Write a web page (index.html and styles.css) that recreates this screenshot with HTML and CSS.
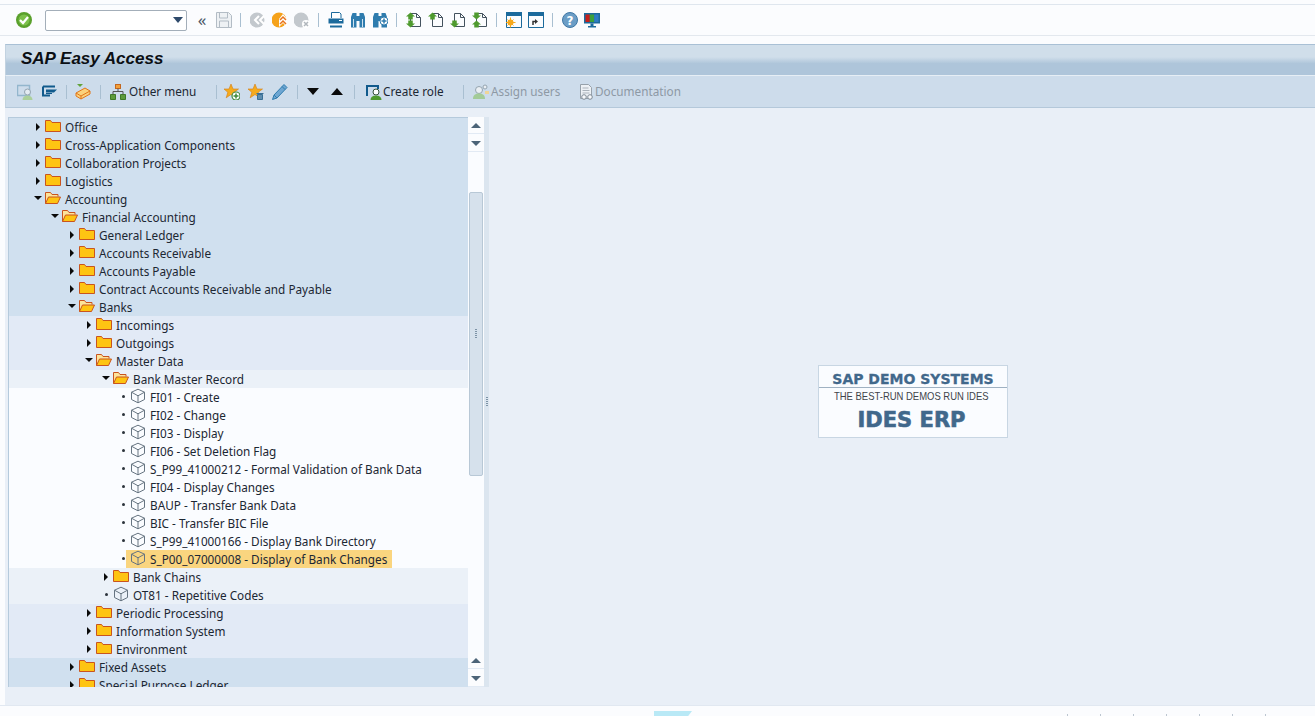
FILE: index.html
```html
<!DOCTYPE html>
<html lang="en">
<head>
    <meta charset="UTF-8">
    <title>SAP Easy Access</title>
    <link rel="stylesheet" href="styles.css">
</head>
<body>
    <svg class="defs" width="0" height="0">
        <symbol id="folder" viewBox="0 0 16 12">
            <path d="M.5 11.500V.5h5l1.500 2h8.500v9z" fill="#fec412" stroke="#c9541f"/>
        </symbol>
        <symbol id="folder-open" viewBox="0 0 16 12">
            <path d="M.5 11.500V.5h5l1.500 2h6v2" fill="#fde49a" stroke="#c9541f"/>
            <path d="M.5 11.500l3-6.500h12l-3 6.500z" fill="#fec412" stroke="#c9541f"/>
        </symbol>
        <symbol id="cube" viewBox="0 0 16 16">
            <path d="M8 1.200l6.500 3v7.300L8 14.800l-6.500-3.300V4.200zM1.500 4.200L8 7.800l6.500-3.600M8 7.800v7" fill="none" stroke="#667481" stroke-linejoin="round"/>
        </symbol>
        <symbol id="page" viewBox="0 0 16 16">
            <path d="M4.500 1.500h6l4 4v9h-10z" fill="#fbfcfe" stroke="#44525e"/>
            <path d="M10.500 1.500v4h4" fill="none" stroke="#44525e"/>
        </symbol>
        <symbol id="up-arrow" viewBox="0 0 10 8">
            <path d="M5 0l5 4.500H7.500V8h-5V4.500H0z" fill="#4f9a2e"/>
        </symbol>
        <symbol id="down-arrow" viewBox="0 0 10 8">
            <path d="M5 8l5-4.500H7.500V0h-5v3.500H0z" fill="#4f9a2e"/>
        </symbol>
    </svg>

    <div class="system-bar">
        <svg class="icon" viewBox="0 0 16 16"><circle cx="8" cy="8" r="8" fill="#5aa02c"/><circle cx="8" cy="8" r="5.500" fill="#7cc04a"/><path d="M4 8l3 3 5-6" fill="none" stroke="#fff" stroke-width="2.200"/></svg>
        <div class="command-box"><span class="combo-arrow"></span></div>
        <span class="chevrons">«</span>
        <span class="btn"><svg class="icon" viewBox="0 0 16 16"><path d="M.5.500h12l3 3v12H.5z" fill="#eef1f4" stroke="#b3bcc5"/><path d="M3.500 1v5h8V1M3.500 15v-6h9v6" fill="none" stroke="#b3bcc5"/></svg></span>
        <span class="sep"></span>
        <span class="btn"><svg class="icon" viewBox="0 0 16 16"><circle cx="7" cy="8" r="7.500" fill="#c3c8cd"/><path d="M9 4L5 8l4 4M14 4l-4 4 4 4" fill="none" stroke="#fff" stroke-width="2"/></svg></span>
        <span class="btn"><svg class="icon" viewBox="0 0 16 16"><circle cx="7" cy="8" r="7.500" fill="#f5a21b"/><path d="M7 15l4-4 4 4V7l-4-5-4 5z" fill="#fff"/><path d="M8 8l3-3 3 3M8 12l3-3 3 3" fill="none" stroke="#e8731a" stroke-width="1.500"/></svg></span>
        <span class="btn"><svg class="icon" viewBox="0 0 16 16"><circle cx="7" cy="8" r="7.500" fill="#c3c8cd"/><circle cx="12" cy="12" r="4" fill="#fff"/><path d="M10 10l4 4M14 10l-4 4" stroke="#b1b7bd" stroke-width="1.500"/></svg></span>
        <span class="sep"></span>
        <span class="btn"><svg class="icon" viewBox="0 0 16 16"><path d="M3.500 6V.500h8l1.500 1.500v4" fill="#fff" stroke="#1c6a9c"/><path d="M.5 6.500h15v5H.5z" fill="#1c6a9c"/><path d="M11 8.500h3" stroke="#fff"/><path d="M2 14.500h12" stroke="#1c6a9c" stroke-width="2"/></svg></span>
        <span class="btn"><svg class="icon" viewBox="0 0 16 16"><path d="M2.500 1H6.500v14.500H1V5zM9.500 1h4l1.500 4v10.500H9.500zM6.500 4h3v5h-3z" fill="#2f7cae"/><path d="M3.500 7v8M12.500 7v8" stroke="#cfe2f0"/></svg></span>
        <span class="btn"><svg class="icon" viewBox="0 0 16 16"><path d="M2.500 1H6.500v14.500H1V5zM9.500 1h4l1.500 4v10.500H9.500zM6.500 4h3v5h-3z" fill="#2f7cae"/><circle cx="12" cy="9" r="4" fill="#fff" stroke="#2f7cae"/><path d="M12 6.500v5M9.500 9h5" stroke="#2f7cae" stroke-width="1.500"/></svg></span>
        <span class="sep"></span>
        <span class="btn"><svg class="icon"><use href="#page"/><use href="#up-arrow" x="0" y="0" width="9" height="8"/><use href="#down-arrow" x="0" y="8" width="9" height="8"/></svg></span>
        <span class="btn"><svg class="icon"><use href="#page"/><use href="#up-arrow" x="0" y="0" width="9" height="8"/></svg></span>
        <span class="btn"><svg class="icon"><use href="#page"/><use href="#down-arrow" x="0" y="8" width="9" height="8"/></svg></span>
        <span class="btn"><svg class="icon"><use href="#page"/><use href="#down-arrow" x="0" y="0" width="9" height="8"/><use href="#up-arrow" x="0" y="8" width="9" height="8"/></svg></span>
        <span class="sep"></span>
        <span class="btn"><svg class="icon" viewBox="0 0 16 16"><path d="M.5 .500h15v15H.5z" fill="#fbfcfe" stroke="#1c6a9c"/><path d="M0 0h16v4H0z" fill="#1c6a9c"/><circle cx="4.500" cy="10.500" r="3" fill="#f7a81b"/><path d="M4.500 5.500v10M0 10.500h9.500M1.500 7.500l6 6M7.500 7.500l-6 6" stroke="#f7a81b"/></svg></span>
        <span class="btn"><svg class="icon" viewBox="0 0 16 16"><path d="M.5 .500h15v15H.5z" fill="#fbfcfe" stroke="#1c6a9c"/><path d="M0 0h16v4H0z" fill="#1c6a9c"/><path d="M5 13V9.500h3" fill="none" stroke="#333" stroke-width="1.500"/><path d="M7 7l3 2.500-3 2.500z" fill="#333"/></svg></span>
        <span class="sep"></span>
        <span class="btn"><svg class="icon" viewBox="0 0 16 16"><circle cx="8" cy="8" r="7.500" fill="#6b9dc6" stroke="#3f77a5"/><text x="8" y="12.500" class="help-mark">?</text></svg></span>
        <span class="btn"><svg class="icon" viewBox="0 0 16 16"><path d="M0 1h16v10.500H0z" fill="#1c6a9c"/><path d="M1.500 2.500h4.300v7.500H1.500z" fill="#c8201c"/><path d="M5.800 2.500h4.400v7.500H5.800z" fill="#3ca03c"/><path d="M10.200 2.500h4.300v7.500h-4.300z" fill="#2e7cc4"/><path d="M6.500 11.500h3v3h-3zM4 14h8v1.500H4z" fill="#1c6a9c"/></svg></span>
    </div>

    <div class="window">
        <div class="title-bar">SAP Easy Access</div>
        <div class="app-toolbar">
            <svg class="icon tool-a dim" viewBox="0 0 16 16"><path d="M.5 1.500h12v10H.5z" fill="none" stroke="#8ab0c8" stroke-width="1.500"/><circle cx="10.500" cy="8" r="3" fill="#e8eef4" stroke="#8a9aa6"/><path d="M5.500 16c0-3 2-4.500 5-4.500s5 1.500 5 4.500z" fill="#a6cf8e"/></svg>
            <svg class="icon tool-b" viewBox="0 0 16 16"><path d="M1 2.500h12M1 2.500v9h7" fill="none" stroke="#115a8c" stroke-width="2"/><path d="M4 5.500h11l-3 3H4z" fill="#115a8c"/><path d="M4 9.500h6" stroke="#115a8c"/></svg>
            <span class="sep sep-a"></span>
            <svg class="icon tool-c" viewBox="0 0 16 16"><path d="M1 9l9-5 5 3v3l-9 5-5-3z" fill="#fbd27c" stroke="#e0761b"/><path d="M1 9l5 3 9-5M6 12v3" fill="none" stroke="#e0761b"/><path d="M2 0h6L5 3z" fill="#62a33b"/></svg>
            <span class="sep sep-b"></span>
            <svg class="icon tool-d" viewBox="0 0 16 16"><path d="M5.500 .500h5v4h-5zM.5 10.500h5v5h-5zM10.500 10.500h5v5h-5z" fill="#5d9b3a" stroke="#3f7a26"/><path d="M5.500 .500h5v4h-5z" fill="#f2a13a" stroke="#c8641c"/><path d="M8 4.500v3M3 10.500v-3h10v3" fill="none" stroke="#555"/></svg>
            <span class="tool-label label-menu">Other menu</span>
            <span class="sep sep-c"></span>
            <svg class="icon tool-e" viewBox="0 0 16 16"><path d="M7 0l2 5h5.500l-4.300 3.300 1.600 5.500L7 10.500 2.200 13.800l1.600-5.500L0 5h5z" fill="#f5ab1d" stroke="#d57c12" stroke-width=".6"/><circle cx="12" cy="12" r="4" fill="#fff" stroke="#3f8a3a" stroke-width="1.200"/><path d="M12 9.500v5M9.500 12h5" stroke="#3f8a3a" stroke-width="1.500"/></svg>
            <svg class="icon tool-f" viewBox="0 0 16 16"><path d="M7 0l2 5h5.500l-4.300 3.300 1.600 5.500L7 10.500 2.200 13.800l1.600-5.500L0 5h5z" fill="#f5ab1d" stroke="#d57c12" stroke-width=".6"/><path d="M8.500 9.500h7M9.500 10.500h5v5h-5z" fill="#5e8eb0" stroke="#396f96"/></svg>
            <svg class="icon tool-g" viewBox="0 0 16 16"><path d="M12 .500l3 3L5 14l-4.500 1.500L2 11z" fill="#6ea6d2" stroke="#2f7cae"/><path d="M2 11l3 3M10 2.500l3 3" stroke="#2f7cae"/></svg>
            <span class="sep sep-d"></span>
            <span class="tri-down"></span>
            <span class="tri-up"></span>
            <span class="sep sep-e"></span>
            <svg class="icon tool-h" viewBox="0 0 16 16"><path d="M1 12V2h11v3" fill="none" stroke="#115a8c" stroke-width="2"/><circle cx="10" cy="8" r="3" fill="#fff" stroke="#34503a"/><path d="M4.500 16c0-3 2-4.500 5.500-4.500s5.500 1.500 5.500 4.500z" fill="#4f9a2e"/></svg>
            <span class="tool-label label-role">Create role</span>
            <span class="sep sep-f"></span>
            <svg class="icon tool-i dim" viewBox="0 0 16 16"><circle cx="6" cy="6" r="3.500" fill="#f0f3f6" stroke="#8a9aa6"/><circle cx="12" cy="3" r="2" fill="#f0f3f6" stroke="#8a9aa6"/><path d="M0 15c0-4 2.500-5.500 6-5.500S12 11 12 15z" fill="#9cc98a"/><path d="M12 7h4v3h-4z" fill="#f5d48a"/></svg>
            <span class="tool-label label-off label-assign">Assign users</span>
            <svg class="icon tool-j dim" viewBox="0 0 16 16"><path d="M1.500 .500h8l3 3v11h-11z" fill="#f3f5f7" stroke="#8e979f"/><path d="M3.500 4h6M3.500 6.500h7M3.500 9h7" stroke="#a6adb3"/><circle cx="5" cy="13" r="2.300" fill="#fff" stroke="#727c85"/><circle cx="11" cy="13" r="2.300" fill="#fff" stroke="#727c85"/></svg>
            <span class="tool-label label-off label-doc">Documentation</span>
        </div>

        <div class="main">
            <div class="tree-panel">
                <div class="tree">
                    <div class="row band-0 lv0"><span class="closed"></span><span class="item"><svg class="node-icon"><use href="#folder"/></svg>Office</span></div>
                    <div class="row band-0 lv0"><span class="closed"></span><span class="item"><svg class="node-icon"><use href="#folder"/></svg>Cross-Application Components</span></div>
                    <div class="row band-0 lv0"><span class="closed"></span><span class="item"><svg class="node-icon"><use href="#folder"/></svg>Collaboration Projects</span></div>
                    <div class="row band-0 lv0"><span class="closed"></span><span class="item"><svg class="node-icon"><use href="#folder"/></svg>Logistics</span></div>
                    <div class="row band-0 lv0"><span class="open"></span><span class="item"><svg class="node-icon"><use href="#folder-open"/></svg>Accounting</span></div>
                    <div class="row band-0 lv1"><span class="open"></span><span class="item"><svg class="node-icon"><use href="#folder-open"/></svg>Financial Accounting</span></div>
                    <div class="row band-0 lv2"><span class="closed"></span><span class="item"><svg class="node-icon"><use href="#folder"/></svg>General Ledger</span></div>
                    <div class="row band-0 lv2"><span class="closed"></span><span class="item"><svg class="node-icon"><use href="#folder"/></svg>Accounts Receivable</span></div>
                    <div class="row band-0 lv2"><span class="closed"></span><span class="item"><svg class="node-icon"><use href="#folder"/></svg>Accounts Payable</span></div>
                    <div class="row band-0 lv2"><span class="closed"></span><span class="item"><svg class="node-icon"><use href="#folder"/></svg>Contract Accounts Receivable and Payable</span></div>
                    <div class="row band-0 lv2"><span class="open"></span><span class="item"><svg class="node-icon"><use href="#folder-open"/></svg>Banks</span></div>
                    <div class="row band-1 lv3"><span class="closed"></span><span class="item"><svg class="node-icon"><use href="#folder"/></svg>Incomings</span></div>
                    <div class="row band-1 lv3"><span class="closed"></span><span class="item"><svg class="node-icon"><use href="#folder"/></svg>Outgoings</span></div>
                    <div class="row band-1 lv3"><span class="open"></span><span class="item"><svg class="node-icon"><use href="#folder-open"/></svg>Master Data</span></div>
                    <div class="row band-2 lv4"><span class="open"></span><span class="item"><svg class="node-icon"><use href="#folder-open"/></svg>Bank Master Record</span></div>
                    <div class="row band-3 lv5"><span class="leaf"></span><span class="item"><svg class="node-icon cube"><use href="#cube"/></svg>FI01 - Create</span></div>
                    <div class="row band-3 lv5"><span class="leaf"></span><span class="item"><svg class="node-icon cube"><use href="#cube"/></svg>FI02 - Change</span></div>
                    <div class="row band-3 lv5"><span class="leaf"></span><span class="item"><svg class="node-icon cube"><use href="#cube"/></svg>FI03 - Display</span></div>
                    <div class="row band-3 lv5"><span class="leaf"></span><span class="item"><svg class="node-icon cube"><use href="#cube"/></svg>FI06 - Set Deletion Flag</span></div>
                    <div class="row band-3 lv5"><span class="leaf"></span><span class="item"><svg class="node-icon cube"><use href="#cube"/></svg>S_P99_41000212 - Formal Validation of Bank Data</span></div>
                    <div class="row band-3 lv5"><span class="leaf"></span><span class="item"><svg class="node-icon cube"><use href="#cube"/></svg>FI04 - Display Changes</span></div>
                    <div class="row band-3 lv5"><span class="leaf"></span><span class="item"><svg class="node-icon cube"><use href="#cube"/></svg>BAUP - Transfer Bank Data</span></div>
                    <div class="row band-3 lv5"><span class="leaf"></span><span class="item"><svg class="node-icon cube"><use href="#cube"/></svg>BIC - Transfer BIC File</span></div>
                    <div class="row band-3 lv5"><span class="leaf"></span><span class="item"><svg class="node-icon cube"><use href="#cube"/></svg>S_P99_41000166 - Display Bank Directory</span></div>
                    <div class="row band-3 lv5"><span class="leaf"></span><span class="item selected"><svg class="node-icon cube"><use href="#cube"/></svg>S_P00_07000008 - Display of Bank Changes</span></div>
                    <div class="row band-2 lv4"><span class="closed"></span><span class="item"><svg class="node-icon"><use href="#folder"/></svg>Bank Chains</span></div>
                    <div class="row band-2 lv4"><span class="leaf"></span><span class="item"><svg class="node-icon cube"><use href="#cube"/></svg>OT81 - Repetitive Codes</span></div>
                    <div class="row band-1 lv3"><span class="closed"></span><span class="item"><svg class="node-icon"><use href="#folder"/></svg>Periodic Processing</span></div>
                    <div class="row band-1 lv3"><span class="closed"></span><span class="item"><svg class="node-icon"><use href="#folder"/></svg>Information System</span></div>
                    <div class="row band-1 lv3"><span class="closed"></span><span class="item"><svg class="node-icon"><use href="#folder"/></svg>Environment</span></div>
                    <div class="row band-0 lv2"><span class="closed"></span><span class="item"><svg class="node-icon"><use href="#folder"/></svg>Fixed Assets</span></div>
                    <div class="row band-0 lv2"><span class="closed"></span><span class="item"><svg class="node-icon"><use href="#folder"/></svg>Special Purpose Ledger</span></div>
                </div>
                <div class="scrollbar">
                    <div class="scroll-btn"><span class="arrow-up"></span></div>
                    <div class="scroll-btn"><span class="arrow-down"></span></div>
                    <div class="scroll-track">
                        <div class="scroll-thumb"><span class="grip"></span></div>
                    </div>
                    <div class="scroll-btn"><span class="arrow-up"></span></div>
                    <div class="scroll-btn"><span class="arrow-down"></span></div>
                </div>
                <div class="sash"><span class="grip"></span></div>
            </div>
            <div class="logo-area">
                <div class="logo">
                    <div class="logo-top">SAP DEMO SYSTEMS</div>
                    <div class="logo-sub">THE BEST-RUN DEMOS RUN IDES</div>
                    <div class="logo-big">IDES ERP</div>
                </div>
            </div>
        </div>
    </div>

    <div class="status-strip">
        <span class="sap-mark"></span>
        <span class="status-ticks"></span>
    </div>
</body>
</html>
```

FILE: styles.css
```css
* {
    box-sizing: border-box;
}
html, body {
    height: 100%;
}
body {
    margin: 0;
    background-color: #fbfcfe;
    font-family: "Noto Sans", sans-serif;
    font-size: 11.75px;
    color: #1c2733;
    display: flex;
    flex-direction: column;
    overflow: hidden;
}
.defs {
    position: absolute;
}
.icon {
    width: 16px;
    height: 16px;
    display: block;
    flex: none;
}
.dim {
    opacity: 0.85;
}

/* top toolbar */
.system-bar {
    height: 32px;
    margin-top: 4px;
    border-top: 1px solid #dfe6ee;
    border-bottom: 1px solid #e3e8ee;
    display: flex;
    align-items: center;
    padding-left: 16px;
    flex: none;
}
.command-box {
    width: 142px;
    height: 21px;
    margin-left: 13px;
    background-color: #fff;
    border: 1px solid #a3aeb9;
    border-radius: 2px;
    position: relative;
}
.combo-arrow {
    position: absolute;
    right: 3px;
    top: 6px;
    border-left: 5px solid transparent;
    border-right: 5px solid transparent;
    border-top: 6px solid #2e4a6b;
}
.chevrons {
    width: 16px;
    margin-left: 7px;
    font-size: 17px;
    line-height: 16px;
    text-align: center;
    color: #4a5866;
}
.btn {
    width: 22px;
    display: flex;
    justify-content: center;
    flex: none;
}
.system-bar .chevrons + .btn {
    margin-left: 3px;
}
.sep {
    width: 1px;
    height: 14px;
    background-color: #a9bfd1;
    flex: none;
}
.system-bar .sep {
    margin: 0 6px 0 5px;
}
.help-mark {
    font-family: "DejaVu Sans", sans-serif;
    font-size: 12px;
    font-weight: bold;
    fill: #fff;
    text-anchor: middle;
}

/* window */
.window {
    flex: 1;
    margin: 8px 0 0 5px;
    display: flex;
    flex-direction: column;
    min-height: 0;
}
.title-bar {
    height: 31px;
    border-top: 1px solid #a9c0d5;
    border-left: 1px solid #c2d2e0;
    background: linear-gradient(#d0deea 0, #d0deea 40%, #aec5da 62%, #aec5da 100%);
    padding: 4px 0 0 15px;
    font-family: "Liberation Sans", sans-serif;
    font-size: 17px;
    font-weight: bold;
    font-style: italic;
    color: #0b0f14;
    flex: none;
}
.app-toolbar {
    height: 33px;
    border-top: 1px solid #e6eef5;
    border-left: 1px solid #c2d2e0;
    border-bottom: 1px solid #b4c8da;
    background-color: #cddceb;
    display: flex;
    align-items: center;
    flex: none;
}
.tool-a { margin-left: 11px; }
.tool-b { margin-left: 9px; }
.sep-a { margin-left: 8px; }
.tool-c { margin-left: 8px; }
.sep-b { margin-left: 9px; }
.tool-d { margin-left: 9px; }
.tool-label {
    margin-left: 3px;
    margin-bottom: 2px;
    white-space: nowrap;
    color: #1c2733;
}
.label-menu { width: 67px; }
.label-role { width: 60px; margin-left: 1px; }
.label-assign { width: 66px; margin-left: 2px; }
.label-doc { width: 84px; margin-left: 0; }
.label-off {
    color: #8d99a5;
}
.sep-c { margin-left: 20px; }
.tool-e { margin-left: 7px; }
.tool-f { margin-left: 8px; }
.tool-g { margin-left: 8px; }
.sep-d { margin-left: 9px; }
.tri-down {
    margin-left: 9px;
    border-left: 6px solid transparent;
    border-right: 6px solid transparent;
    border-top: 7px solid #0a0a0a;
}
.tri-up {
    margin-left: 12px;
    border-left: 6px solid transparent;
    border-right: 6px solid transparent;
    border-bottom: 7px solid #0a0a0a;
}
.sep-e { margin-left: 11px; }
.tool-h { margin-left: 11px; }
.sep-f { margin-left: 20px; }
.tool-i { margin-left: 9px; }
.tool-j { margin-left: 22px; }

/* main area */
.main {
    flex: 1;
    min-height: 0;
    background-color: #e9eff7;
    display: flex;
    padding: 9px 0 18px 3px;
}
.tree-panel {
    width: 481px;
    display: flex;
    flex: none;
}
.tree {
    width: 460px;
    border-top: 1px solid #b5cadc;
    border-left: 1px solid #b5cadc;
    overflow: hidden;
    flex: none;
}
.row {
    height: 18px;
    display: flex;
    align-items: center;
    white-space: nowrap;
}
.band-0 { background-color: #d0e0ef; }
.band-1 { background-color: #e2eaf6; }
.band-2 { background-color: #ebf1f8; }
.band-3 { background-color: #fafcff; }
.lv0 { padding-left: 22px; }
.lv1 { padding-left: 39px; }
.lv2 { padding-left: 56px; }
.lv3 { padding-left: 73px; }
.lv4 { padding-left: 90px; }
.lv5 { padding-left: 107px; }
.closed, .open, .leaf {
    width: 10px;
    height: 18px;
    position: relative;
    flex: none;
}
.closed::before {
    content: "";
    position: absolute;
    left: 5px;
    top: 5px;
    border-top: 4px solid transparent;
    border-bottom: 4px solid transparent;
    border-left: 4px solid #0a0a0a;
}
.open::before {
    content: "";
    position: absolute;
    left: 3px;
    top: 6px;
    border-left: 4px solid transparent;
    border-right: 4px solid transparent;
    border-top: 4px solid #0a0a0a;
}
.leaf::before {
    content: "";
    position: absolute;
    left: 6px;
    top: 7px;
    width: 3px;
    height: 3px;
    border-radius: 50%;
    background-color: #2b333b;
}
.item {
    display: flex;
    align-items: center;
    height: 18px;
    padding: 0 1px 0 4px;
    gap: 4px;
}
.selected {
    background-color: #fad57f;
    padding-right: 5px;
}
.node-icon {
    width: 16px;
    height: 12px;
    margin-top: -2px;
    flex: none;
}
.node-icon.cube {
    height: 16px;
}

/* scrollbar */
.scrollbar {
    width: 16px;
    background-color: #fafcff;
    display: flex;
    flex-direction: column;
    gap: 1px;
    flex: none;
}
.scroll-btn {
    height: 17px;
    background-color: #fbfcfe;
    border-bottom: 1px solid #e2eaf4;
    display: flex;
    align-items: center;
    justify-content: center;
    flex: none;
}
.arrow-up {
    border-left: 5px solid transparent;
    border-right: 5px solid transparent;
    border-bottom: 5px solid #4c6478;
}
.arrow-down {
    border-left: 5px solid transparent;
    border-right: 5px solid transparent;
    border-top: 5px solid #4c6478;
}
.scroll-track {
    flex: 1;
    padding: 39px 1px 0;
}
.scroll-thumb {
    height: 284px;
    background-color: #d6e1ec;
    border: 1px solid #b8c8d6;
    border-radius: 2px;
    display: flex;
    align-items: center;
    justify-content: center;
}
.sash {
    width: 5px;
    background-color: #dbe5ef;
    display: flex;
    align-items: center;
    justify-content: center;
    flex: none;
}
.grip {
    width: 2px;
    height: 10px;
    background-image: linear-gradient(#7d93a6 50%, transparent 50%);
    background-size: 2px 2px;
}
.logo-area {
    flex: 1;
    padding: 248px 0 0 329px;
}
.logo {
    width: 190px;
    height: 73px;
    background-color: #fafcff;
    border: 1px solid #c8d6e3;
    text-align: center;
    font-family: "DejaVu Sans", sans-serif;
}
.logo-top {
    height: 22px;
    border-bottom: 1px solid #9fb1c2;
    font-size: 14px;
    font-weight: bold;
    line-height: 26px;
    color: #41688b;
    white-space: nowrap;
    -webkit-text-stroke: 0.3px #41688b;
}
.logo-sub {
    font-family: "Liberation Sans", sans-serif;
    font-size: 11px;
    line-height: 16px;
    padding-right: 4px;
    color: #3f444a;
    white-space: nowrap;
    transform: scaleX(0.86);
}
.logo-big {
    font-size: 21px;
    font-weight: bold;
    line-height: 32px;
    padding-right: 3px;
    color: #41688b;
    white-space: nowrap;
    -webkit-text-stroke: 0.6px #41688b;
}

/* bottom strip */
.status-strip {
    height: 11px;
    border-top: 1px solid #e1e8f1;
    padding: 5px 0 0 654px;
    display: flex;
    flex: none;
    overflow: hidden;
}
.sap-mark {
    width: 38px;
    height: 6px;
    background-color: #b9e9f6;
    clip-path: polygon(0 0, 100% 0, 88% 100%, 0 100%);
}
.status-ticks {
    width: 210px;
    height: 2px;
    margin: 3px 0 0 375px;
    background-image: repeating-linear-gradient(90deg, #bcc6d0 0, #bcc6d0 1px, transparent 1px, transparent 33px);
}
```
